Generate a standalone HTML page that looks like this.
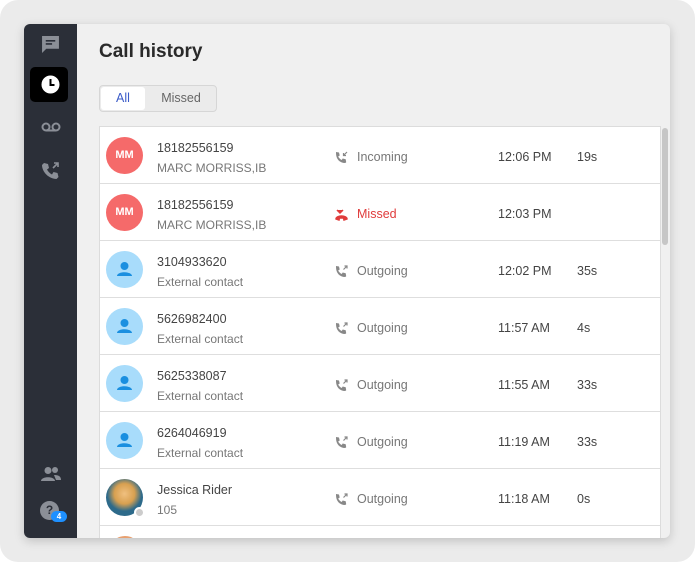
<!DOCTYPE html>
<html><head><style>
*{box-sizing:border-box;margin:0;padding:0}
body{width:699px;height:567px;background:#fff;font-family:"Liberation Sans",sans-serif;position:relative;overflow:hidden}
.outer{position:absolute;left:0;top:0;width:695px;height:562px;background:#ebebeb;border-radius:18px}
.win{position:absolute;left:24px;top:24px;width:646px;height:514px;background:#f0f0f0;border-radius:6px;overflow:hidden;box-shadow:0 3px 10px rgba(0,0,0,.18)}
.side{position:absolute;left:0;top:0;width:53px;height:514px;background:#2b2f38}
.ic{position:absolute;left:0;width:53px;display:flex;justify-content:center}
h1{position:absolute;left:75px;top:17px;font-size:19px;font-weight:bold;color:#2a2a2a}
.tabs{position:absolute;left:75px;top:61px;width:118px;height:27px;border:1px solid #d6d6d6;border-radius:4px;background:#ebebeb;font-size:12.5px}
.tabs .a{position:absolute;left:1px;top:1px;width:44px;height:23px;background:#fff;border-radius:3px;color:#3b5bc8;text-align:center;line-height:23px}
.tabs .m{position:absolute;left:46px;top:1px;width:70px;text-align:center;line-height:23px;color:#666}
.list{position:absolute;left:75px;top:102px;width:562px;height:420px;background:#fff;border:1px solid #dcdcdc}
.row{position:absolute;left:0;width:560px;height:57px;border-bottom:1px solid #dedede}
.av{position:absolute;left:6px;top:10px;width:37px;height:37px;border-radius:50%;color:#fff;font-size:11px;font-weight:bold;text-align:center;line-height:37px}
.red{background:#f56a6a}
.blue{background:#a8dcfb}
.n{position:absolute;left:57px;top:14px;font-size:12.5px;color:#444}
.s{position:absolute;left:57px;top:34px;font-size:12px;color:#777}
.t{position:absolute;left:257px;top:23px;font-size:12.5px;color:#777}
.t svg{position:absolute;left:-22px;top:1px}
.tm{position:absolute;left:398px;top:23px;font-size:12.5px;color:#444}
.d{position:absolute;left:477px;top:23px;font-size:12.5px;color:#444}
.sb{position:absolute;left:638px;top:104px;width:6px;height:117px;background:#c6c6c6;border-radius:3px}
</style></head><body>
<div class="outer"></div>
<div class="win">
<div class="side">
<div class="ic" style="top:11px"><svg width="19" height="19" viewBox="0 0 18 18"><path d="M1 1h16v12H5l-4 4z" fill="#8b8f97"/><path d="M4.5 5.5h9M4.5 8.5h6" stroke="#2b2f38" stroke-width="1.5"/></svg></div>
<div style="position:absolute;left:6px;top:43px;width:38px;height:35px;background:#000;border-radius:5px"></div>
<div class="ic" style="top:51px"><svg width="19" height="19" viewBox="0 0 19 19"><circle cx="9.5" cy="9.5" r="9" fill="#fff"/><path d="M9.5 4v6h4" stroke="#000" stroke-width="2" fill="none"/></svg></div>
<div class="ic" style="top:98px"><svg width="20" height="10" viewBox="0 0 20 10"><circle cx="5" cy="5" r="3.5" stroke="#8b8f97" stroke-width="2" fill="none"/><circle cx="15" cy="5" r="3.5" stroke="#8b8f97" stroke-width="2" fill="none"/><path d="M5 8.5h10" stroke="#8b8f97" stroke-width="2"/></svg></div>
<div class="ic" style="top:137px"><svg width="19" height="19" viewBox="0 0 19 19"><path d="M3 2l4 1 1 4-2 1.5c1 2 3 4 5 5L12.5 11l4 1 1 4-2 2C8 18 1 11 1 4z" fill="#8b8f97"/><path d="M12 7l5-5M17 6V2h-4" stroke="#8b8f97" stroke-width="1.6" fill="none"/></svg></div>
<div class="ic" style="top:442px"><svg width="22" height="16" viewBox="0 0 22 16"><circle cx="8" cy="4.5" r="3.5" fill="#8b8f97"/><circle cx="15" cy="4" r="3" fill="#8b8f97"/><path d="M1 15c0-5 14-5 14 0zM14 9c4 0 7 1 7 5h-5z" fill="#8b8f97"/></svg></div>
<div style="position:absolute;left:16px;top:477px;width:19px;height:19px;border-radius:50%;background:#8b8f97;color:#2b2f38;font-size:12px;font-weight:bold;text-align:center;line-height:19px">?</div>
<div style="position:absolute;left:27px;top:487px;width:16px;height:11px;border-radius:6px;background:#1e90ff;color:#fff;font-size:8px;font-weight:bold;text-align:center;line-height:11px">4</div>
</div>
<h1>Call history</h1>
<div class="tabs"><div class="a">All</div><div class="m">Missed</div></div>
<div class="list">
<div class="row" style="top:0"><div class="av red">MM</div><div class="n">18182556159</div><div class="s">MARC MORRISS,IB</div><div class="t"><svg width="13" height="13" viewBox="0 0 13 13"><path d="M1 1l3 .5.7 3-1.5 1c.7 1.5 2 2.8 3.5 3.5l1-1.5 3 .7.5 3-1 .8C4.5 12 1 8 1 2z" fill="#888"/><path d="M12 1L8.5 4.5M8.5 2v2.5H11" stroke="#888" stroke-width="1.2" fill="none"/></svg>Incoming</div><div class="tm">12:06 PM</div><div class="d">19s</div></div>
<div class="row" style="top:57px"><div class="av red">MM</div><div class="n">18182556159</div><div class="s">MARC MORRISS,IB</div><div class="t" style="color:#e03c3c"><svg width="13" height="13" viewBox="0 0 13 13"><path d="M2 2l3 3 3-3M1 11c0-4 11-4 11 0l-3 1-.5-2h-4L4 12z" stroke="#e03c3c" stroke-width="1.5" fill="#e03c3c"/></svg>Missed</div><div class="tm">12:03 PM</div></div>
<div class="row" style="top:114px"><div class="av blue"></div><div class="n">3104933620</div><div class="s">External contact</div><div class="t">Outgoing</div><div class="tm">12:02 PM</div><div class="d">35s</div></div>
<div class="row" style="top:171px"><div class="av blue"></div><div class="n">5626982400</div><div class="s">External contact</div><div class="t">Outgoing</div><div class="tm">11:57 AM</div><div class="d">4s</div></div>
<div class="row" style="top:228px"><div class="av blue"></div><div class="n">5625338087</div><div class="s">External contact</div><div class="t">Outgoing</div><div class="tm">11:55 AM</div><div class="d">33s</div></div>
<div class="row" style="top:285px"><div class="av blue"></div><div class="n">6264046919</div><div class="s">External contact</div><div class="t">Outgoing</div><div class="tm">11:19 AM</div><div class="d">33s</div></div>
<div class="row" style="top:342px"><div class="av" style="background:radial-gradient(circle at 50% 40%,#f0c080 0,#d8a050 35%,#2d6a8a 60%)"></div><div style="position:absolute;left:34px;top:38px;width:11px;height:11px;border-radius:50%;background:#ccc;border:2px solid #fff"></div><div class="n">Jessica Rider</div><div class="s">105</div><div class="t">Outgoing</div><div class="tm">11:18 AM</div><div class="d">0s</div></div>
<div style="position:absolute;left:12px;top:409px;width:26px;height:20px;border-radius:50%;background:#e8a070"></div>
</div>
<div class="sb"></div>
</div>
<script>
document.querySelectorAll('.av.blue').forEach(function(e){e.innerHTML='<svg width="37" height="37" viewBox="0 0 37 37"><circle cx="18.5" cy="15" r="4" fill="#1a8fe0"/><path d="M11 25c0-5 15-5 15 0z" fill="#1a8fe0"/></svg>'});
document.querySelectorAll('.t').forEach(function(e){if(!e.querySelector('svg'))e.insertAdjacentHTML('afterbegin','<svg width="13" height="13" viewBox="0 0 13 13"><path d="M1 1l3 .5.7 3-1.5 1c.7 1.5 2 2.8 3.5 3.5l1-1.5 3 .7.5 3-1 .8C4.5 12 1 8 1 2z" fill="#888"/><path d="M8.5 4.5L12 1M9.5 1H12v2.5" stroke="#888" stroke-width="1.2" fill="none"/></svg>')});
</script>
</body></html>
